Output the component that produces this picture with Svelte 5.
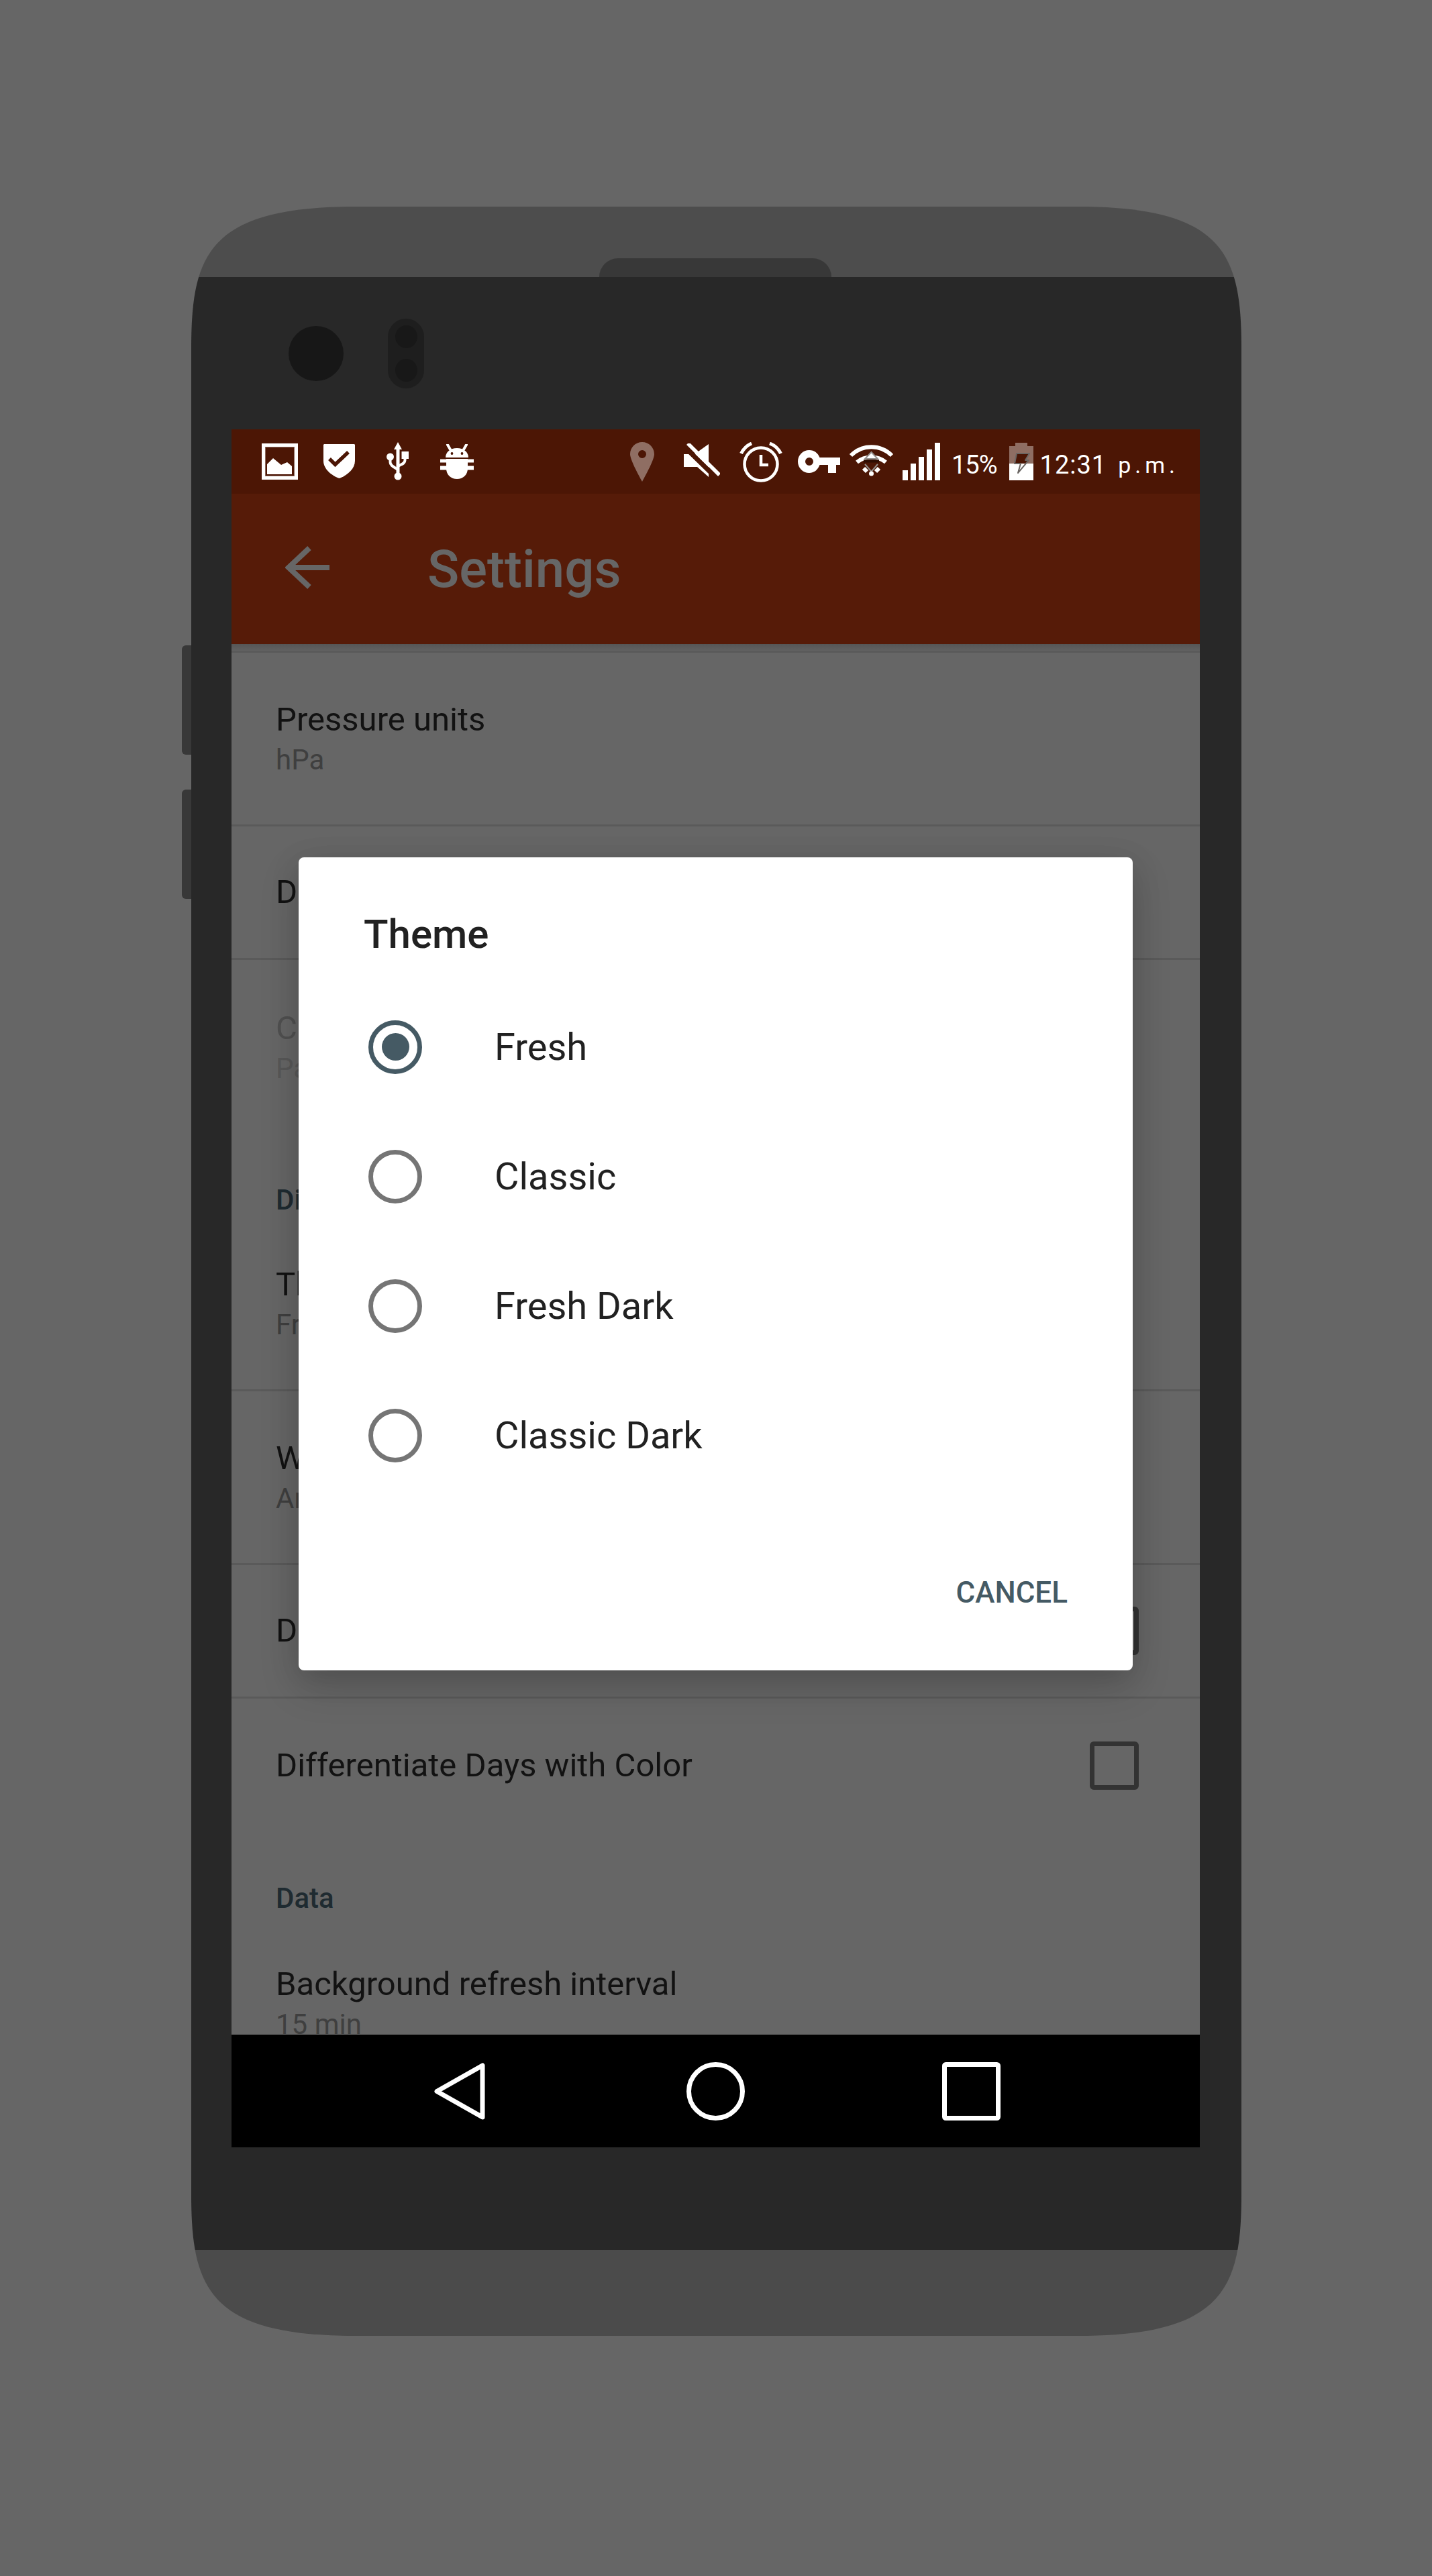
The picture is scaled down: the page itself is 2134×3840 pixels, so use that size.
<script>
  const items = [
    { title: 'Pressure units', sub: 'hPa' },
    { title: 'Date format', single: true },
    { title: 'Custom date format', sub: 'Pattern', off: true, last: true },
    { header: 'Display' },
    { title: 'Theme', sub: 'Fresh' },
    { title: 'Wind direction format', sub: 'Arrows' },
    { title: 'Display decimal places', single: true, check: true },
    { title: 'Differentiate Days with Color', single: true, check: true, last: true },
    { header: 'Data' },
    { title: 'Background refresh interval', sub: '15 min', last: true }
  ]
  const themes = ['Fresh', 'Classic', 'Fresh Dark', 'Classic Dark']
  let selected = 'Fresh'
</script>

<div class="page">
  <div class="side-keys">
    <div class="key"></div>
    <div class="key"></div>
  </div>

  <div class="phone">
    <div class="bezel-top"><div class="speaker"></div></div>

    <div class="body">
      <div class="sensors">
        <div class="camera"></div>
        <div class="flash"><div class="lens"></div><div class="lens"></div></div>
      </div>

      <div class="screen">
        <div class="status">
          <svg class="i-image" width="54" height="54" viewBox="0 0 54 54">
            <rect x="2.5" y="2.5" width="49" height="49" fill="none" stroke="#fff" stroke-width="5"/>
            <rect x="5.5" y="5.5" width="43" height="43" fill="none" stroke="#8f6e63" stroke-width="1"/>
            <path d="M8 46V31l9-9 12 10 9-4 7 6v12z" fill="#fff"/>
          </svg>
          <svg class="i-shield" width="47" height="52" viewBox="0 0 47 52">
            <path d="M1 1h45l1 1v24c0 12-12 22-23.500 26C12 48 0 38 0 26V2z" fill="#fff"/>
            <path d="M9 23l8.500 8.500L37 13" fill="none" stroke="#4c1605" stroke-width="5.500"/>
          </svg>
          <svg class="i-usb" width="33" height="57" viewBox="0 0 33 57">
            <path d="M17 0l6 11h-3.500v37h-5V11H11z" fill="#fff"/>
            <circle cx="17" cy="51" r="5.500" fill="#fff"/>
            <circle cx="5.500" cy="22" r="5.500" fill="#fff"/>
            <rect x="22.500" y="14" width="10.500" height="11" fill="#fff"/>
            <path d="M5.500 24v6c0 5 5 7 11.500 11M27.500 24v3c0 5-5 6-10.500 9" fill="none" stroke="#fff" stroke-width="4"/>
          </svg>
          <svg class="i-bug" width="50" height="52" viewBox="0 0 50 52">
            <path d="M8 20c0-8 7-14 17-14s17 6 17 14z" fill="#fff"/>
            <path d="M11 1l4 7M39 1l-4 7" stroke="#fff" stroke-width="4" stroke-linecap="round"/>
            <circle cx="17.500" cy="14" r="1.900" fill="#4c1605"/>
            <circle cx="32.500" cy="14" r="1.900" fill="#4c1605"/>
            <path d="M9 22h32v14c0 10-7 16-16 16S9 46 9 36z" fill="#fff"/>
            <rect y="22.500" width="50" height="5.500" fill="#fff"/>
            <rect y="32.500" width="50" height="6" fill="#fff"/>
            <path d="M0 29.500h9M41 29.500h9" stroke="#4c1605" stroke-width="4"/>
          </svg>
          <div class="status-gap"></div>
          <svg class="i-pin" width="36" height="59" viewBox="0 0 36 59">
            <path fill-rule="evenodd" d="M18 0c10 0 18 8 18 18 0 8-12 30-18 41C12 48 0 26 0 18 0 8 8 0 18 0zm0 12a6 6 0 100 12 6 6 0 000-12z" fill="#8f6e63"/>
          </svg>
          <svg class="i-mute" width="54" height="50" viewBox="0 0 54 50">
            <path d="M0 16h16L37 1v49L20 35H0z" fill="#fff"/>
            <path d="M2 6l46 45" stroke="#4c1605" stroke-width="7"/>
            <path d="M6 0l47 47" stroke="#fff" stroke-width="5.500"/>
          </svg>
          <svg class="i-alarm" width="64" height="60" viewBox="0 0 64 60">
            <circle cx="32" cy="33" r="24.500" fill="none" stroke="#fff" stroke-width="4.500"/>
            <path d="M32 19v15h11" fill="none" stroke="#fff" stroke-width="4.500"/>
            <path d="M2.500 17C6 10 11 5 18 2M45 2c8 3 13 8 16.500 15" fill="none" stroke="#fff" stroke-width="5"/>
          </svg>
          <svg class="i-key" width="63" height="34" viewBox="0 0 63 34">
            <path fill-rule="evenodd" d="M17 0c7.500 0 13 4.500 15.500 11H63v11h-6v12H45V22H32.500C30 29 24.500 34 17 34 7.500 34 0 26.500 0 17S7.500 0 17 0zm0 11a6 6 0 100 12 6 6 0 000-12z" fill="#fff"/>
          </svg>
          <svg class="i-wifi" width="67" height="50" viewBox="0 0 67 50">
            <path d="M3 18C20 1 47 1 64 18" fill="none" stroke="#fff" stroke-width="6"/>
            <path d="M12 28c12-10 31-10 43 0" fill="none" stroke="#fff" stroke-width="6"/>
            <path d="M22 37l5 5M45 37l-5 5" fill="none" stroke="#fff" stroke-width="6"/>
            <path d="M33.500 13L43 23H24z" fill="#fff" stroke="#948f8c" stroke-width="2"/>
            <path d="M22 26.500h23" stroke="#2e0d02" stroke-width="4"/>
            <path d="M24 31l9.500 11L43 31" fill="none" stroke="#948f8c" stroke-width="2"/>
            <circle cx="33.500" cy="45" r="3.500" fill="#fff"/>
          </svg>
          <svg class="i-signal" width="56" height="56" viewBox="0 0 56 56">
            <rect x="0" y="41" width="8" height="15" fill="#fff"/>
            <rect x="12" y="31" width="8" height="25" fill="#fff"/>
            <rect x="24" y="21" width="8" height="35" fill="#fff"/>
            <rect x="36" y="10" width="8" height="46" fill="#fff"/>
            <rect x="48" y="0" width="8" height="56" fill="#fff"/>
          </svg>
          <span class="pct">15%</span>
          <svg class="i-battery" width="36" height="56" viewBox="0 0 36 56">
            <defs>
              <linearGradient id="bolt-fill" gradientUnits="userSpaceOnUse" x1="0" y1="0" x2="0" y2="56">
                <stop offset="0.55" stop-color="#4c1605"/>
                <stop offset="0.55" stop-color="#fff"/>
              </linearGradient>
            </defs>
            <path d="M9 0h18v5h9v26H0V5h9z" fill="#8f6e63"/>
            <rect y="31" width="36" height="25" fill="#fff"/>
            <path d="M11 16h19l-6 10h5L13 45l4-14H8z" fill="url(#bolt-fill)" stroke="#6b6663" stroke-width="2" stroke-linejoin="round"/>
          </svg>
          <span class="clock">12:31</span>
          <span class="ampm">p.m.</span>
        </div>

        <div class="toolbar">
          <svg class="back" width="66" height="64" viewBox="0 0 66 64">
            <path d="M66 32H6M36 3L5 32l31 29" fill="none" stroke="#666" stroke-width="8"/>
          </svg>
          <span class="toolbar-title">Settings</span>
        </div>

        <div class="list">
          <div class="toolbar-shadow"></div>
          {#each items as item}
            {#if item.header}
              <div class="section">{item.header}</div>
            {:else}
              <div class="row" class:single={item.single} class:off={item.off} class:last={item.last}>
                <div class="row-text">
                  <div class="row-title">{item.title}</div>
                  {#if item.sub}<div class="row-sub">{item.sub}</div>{/if}
                </div>
                {#if item.check}<div class="checkbox"></div>{/if}
              </div>
            {/if}
          {/each}
        </div>

        <div class="nav">
          <svg width="87" height="87" viewBox="0 0 87 87">
            <path d="M77 5v77L9 43.500z" fill="none" stroke="#fff" stroke-width="7" stroke-linejoin="round"/>
          </svg>
          <svg width="87" height="87" viewBox="0 0 87 87">
            <circle cx="43.500" cy="43.500" r="40" fill="none" stroke="#fff" stroke-width="7"/>
          </svg>
          <svg width="87" height="87" viewBox="0 0 87 87">
            <rect x="3.500" y="3.500" width="80" height="80" rx="2" fill="none" stroke="#fff" stroke-width="7"/>
          </svg>
        </div>

        <div class="dialog">
          <div class="dialog-title">Theme</div>
          <div class="options">
            {#each themes as theme}
              <div class="option">
                <div class="radio" class:on={theme === selected}></div>
                <span>{theme}</span>
              </div>
            {/each}
          </div>
          <div class="actions"><span class="cancel">CANCEL</span></div>
        </div>
      </div>
    </div>

    <div class="bezel-bottom"></div>
  </div>
</div>

<style>
  :global(body) {
    background: #666;
  }
  .page {
    display: flex;
    align-items: flex-start;
    box-sizing: border-box;
    height: 3840px;
    padding: 308px 0 0 271px;
    font-family: Roboto, "Liberation Sans", sans-serif;
  }
  .side-keys {
    display: flex;
    flex-direction: column;
    gap: 52px;
    margin-top: 654px;
  }
  .key {
    width: 14px;
    height: 163px;
    background: #383838;
    border-radius: 6px 0 0 6px;
  }
  .phone {
    display: flex;
    flex-direction: column;
    width: 1565px;
    height: 3174px;
    clip-path: path('M0 212C0 72 25 0 245 0H1320C1540 0 1565 72 1565 212V2962C1565 3102 1540 3174 1320 3174H245C25 3174 0 3102 0 2962Z');
  }
  .bezel-top {
    display: flex;
    justify-content: center;
    align-items: flex-end;
    height: 105px;
    background: #4d4d4d;
  }
  .speaker {
    width: 346px;
    height: 28px;
    margin-left: -3px;
    background: #383838;
    border-radius: 28px 28px 0 0;
  }
  .body {
    height: 2941px;
    background: #282828;
  }
  .bezel-bottom {
    height: 128px;
    background: #4b4b4b;
  }
  .sensors {
    display: flex;
    align-items: center;
    gap: 66px;
    height: 227px;
    box-sizing: border-box;
    padding: 0 0 0 145px;
  }
  .camera {
    width: 82px;
    height: 82px;
    border-radius: 50%;
    background: #171717;
  }
  .flash {
    display: flex;
    flex-direction: column;
    align-items: center;
    justify-content: center;
    gap: 16px;
    width: 54px;
    height: 104px;
    border-radius: 27px;
    background: #1e1e1e;
  }
  .lens {
    width: 33px;
    height: 34px;
    border-radius: 50%;
    background: #181818;
  }
  .screen {
    position: relative;
    display: flex;
    flex-direction: column;
    width: 1443px;
    height: 2561px;
    margin-left: 60px;
    background: #666;
  }
  .status {
    display: flex;
    align-items: flex-start;
    height: 96px;
    padding: 19px 0 0 45px;
    box-sizing: border-box;
    background: #4c1605;
    color: #fff;
  }
  .status svg {
    flex: none;
    margin-top: 2px;
  }
  .i-shield { margin-left: 38px; }
  .i-usb { margin: 0 0 0 47px !important; }
  .i-bug { margin: 3px 0 0 47px !important; }
  .status-gap { width: 233px; flex: none; }
  .i-pin { margin-top: 0 !important; }
  .i-mute { margin-left: 44px; }
  .i-alarm { margin: 0 0 0 29px !important; }
  .i-key { margin: 12px 0 0 23px !important; }
  .i-wifi { margin-left: 13px; }
  .i-signal { margin: 1px 0 0 13px !important; }
  .i-battery { margin: 1px 0 0 18px !important; }
  .pct, .clock, .ampm {
    flex: none;
    font-size: 38px;
    font-weight: 400;
    line-height: 44px;
  }
  .pct {
    margin: 12px 0 0 17px;
    letter-spacing: -1px;
  }
  .clock {
    margin: 12px 0 0 10px;
    letter-spacing: 1px;
  }
  .ampm {
    margin: 12px 0 0 17px;
    font-size: 34px;
    letter-spacing: 6px;
  }
  .toolbar {
    display: flex;
    align-items: center;
    height: 224px;
    box-sizing: border-box;
    padding-left: 80px;
    background: #561b08;
    color: #666;
  }
  .back {
    flex: none;
    margin-top: -4px;
  }
  .toolbar-title {
    margin-left: 146px;
    font-size: 78px;
    font-weight: 500;
  }
  .list {
    height: 2073px;
    overflow: hidden;
  }
  .toolbar-shadow {
    height: 13px;
    background: linear-gradient(#565656, #616161 75%, #5a5a5a 75%);
  }
  .row {
    display: flex;
    align-items: center;
    justify-content: space-between;
    box-sizing: border-box;
    height: 259px;
    padding: 0 91px 0 66px;
    border-bottom: 3px solid #5a5a5a;
  }
  .row.single {
    height: 199px;
  }
  .row.last {
    border-bottom: 0;
  }
  .row-title {
    font-size: 49px;
    line-height: 62px;
    color: #121212;
  }
  .row-sub {
    margin-top: 2px;
    font-size: 42px;
    line-height: 54px;
    color: #3f3f3f;
  }
  .off .row-title { color: #505050; }
  .off .row-sub { color: #585858; }
  .checkbox {
    box-sizing: border-box;
    width: 73px;
    height: 72px;
    border: 7px solid #333;
    border-radius: 6px;
  }
  .section {
    display: flex;
    align-items: flex-end;
    box-sizing: border-box;
    height: 125px;
    padding: 0 0 2px 66px;
    font-size: 42px;
    font-weight: 500;
    color: #1f2b31;
  }
  .nav {
    display: flex;
    justify-content: center;
    align-items: center;
    gap: 294px;
    height: 168px;
    background: #000;
  }
  .dialog {
    position: absolute;
    left: 100px;
    top: 638px;
    width: 1243px;
    height: 1212px;
    border-radius: 8px;
    background: #fff;
    box-shadow: 0 24px 60px rgba(0, 0, 0, 0.16), 0 9px 46px rgba(0, 0, 0, 0.1);
  }
  .dialog-title {
    height: 186px;
    box-sizing: border-box;
    padding: 80px 0 0 97px;
    font-size: 60px;
    line-height: 70px;
    font-weight: 500;
    color: #212121;
  }
  .option {
    display: flex;
    align-items: center;
    height: 193px;
    padding-left: 104px;
    font-size: 56px;
    color: #212121;
  }
  .option span {
    margin-left: 108px;
  }
  .radio {
    flex: none;
    display: flex;
    align-items: center;
    justify-content: center;
    box-sizing: border-box;
    width: 80px;
    height: 80px;
    border: 7px solid #757575;
    border-radius: 50%;
  }
  .radio.on {
    border-color: #455a64;
  }
  .radio.on::after {
    content: '';
    width: 41px;
    height: 41px;
    border-radius: 50%;
    background: #455a64;
  }
  .actions {
    display: flex;
    justify-content: flex-end;
    padding: 112px 97px 0 0;
  }
  .cancel {
    font-size: 44px;
    font-weight: 500;
    line-height: 52px;
    color: #455a64;
  }
</style>
